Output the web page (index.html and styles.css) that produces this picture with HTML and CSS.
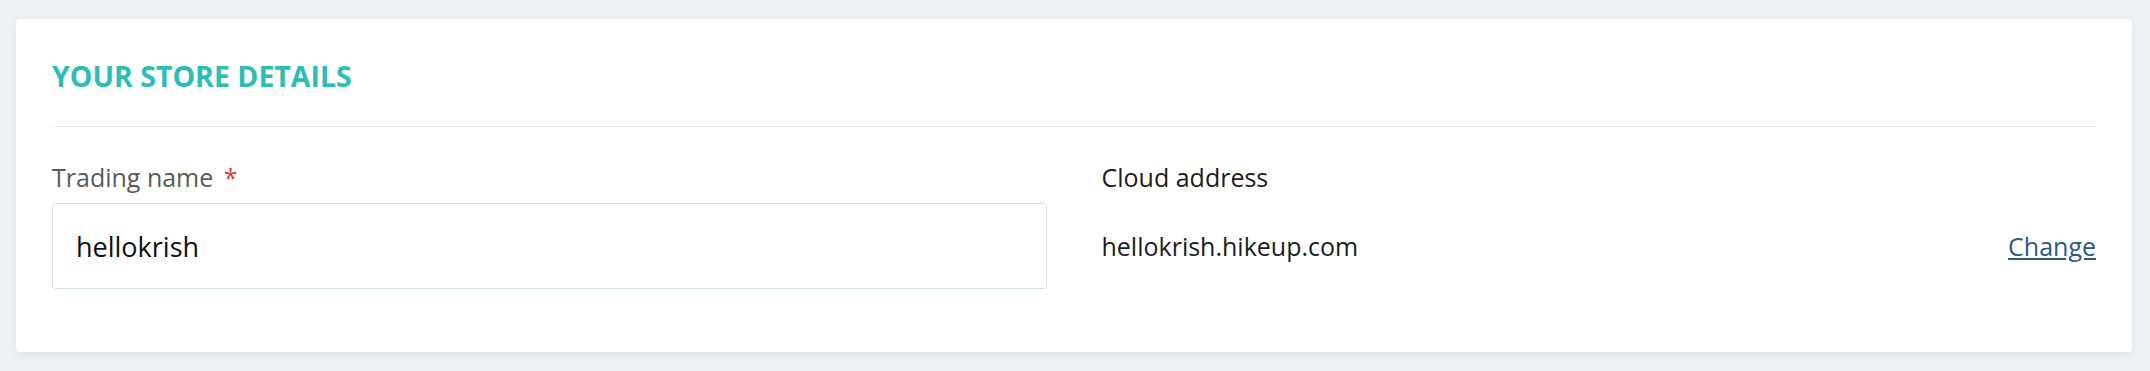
FILE: index.html
```html
<!DOCTYPE html>
<html lang="en">
<head>
    <meta charset="UTF-8">
    <meta name="viewport" content="width=device-width, initial-scale=1.0">
    <title>Your store details</title>
    <link rel="stylesheet" href="styles.css">
</head>
<body>
    <section class="card">
        <header class="card-header">
            <h2>Your store details</h2>
        </header>
        <div class="fields">
            <div class="field">
                <label for="tradingName">Trading name <span class="required">*</span></label>
                <input type="text" id="tradingName" name="tradingName" value="hellokrish">
            </div>
            <div class="field">
                <span class="field-label">Cloud address</span>
                <div class="address-row">
                    <span class="address">hellokrish.hikeup.com</span>
                    <a href="#" class="change-link">Change</a>
                </div>
            </div>
        </div>
    </section>
</body>
</html>
```

FILE: styles.css
```css
body {
    margin: 0;
    padding: 19px 18px 19px 16px;
    background-color: #edf0f4;
    font-family: "Open Sans", Arial, sans-serif;
}
.card {
    background-color: #fff;
    border-radius: 4px;
    box-shadow: 0 2px 8px rgba(40, 50, 70, 0.07);
    padding: 37px 36px 63px 36px;
}
.card-header {
    border-bottom: 1px solid #e8eaed;
    padding-bottom: 30px;
    margin-bottom: 33px;
}
.card-header h2 {
    margin: 0;
    font-size: 28.5px;
    line-height: 40px;
    font-weight: 700;
    text-transform: uppercase;
    color: #2bbdb6;
}
.fields {
    display: grid;
    grid-template-columns: 1fr 1fr;
    column-gap: 55px;
}
.field label, .field-label {
    display: block;
    font-size: 25px;
    line-height: 34px;
    margin-bottom: 9px;
}
.field label {
    color: #5a5a5a;
}
.field-label {
    color: #1c1c1c;
}
.required {
    color: #e53935;
    margin-left: 4px;
}
.field input[type="text"] {
    display: block;
    box-sizing: border-box;
    width: 100%;
    height: 86px;
    padding: 0 23px;
    border: 1px solid #d3e2e0;
    border-radius: 4px;
    font-family: inherit;
    font-size: 27px;
    color: #111;
    outline: none;
}
.address-row {
    display: flex;
    justify-content: space-between;
    align-items: center;
    height: 86px;
    font-size: 25px;
}
.address {
    color: #1c1c1c;
}
.change-link {
    color: #2a5a87;
    text-decoration: underline;
}
```
